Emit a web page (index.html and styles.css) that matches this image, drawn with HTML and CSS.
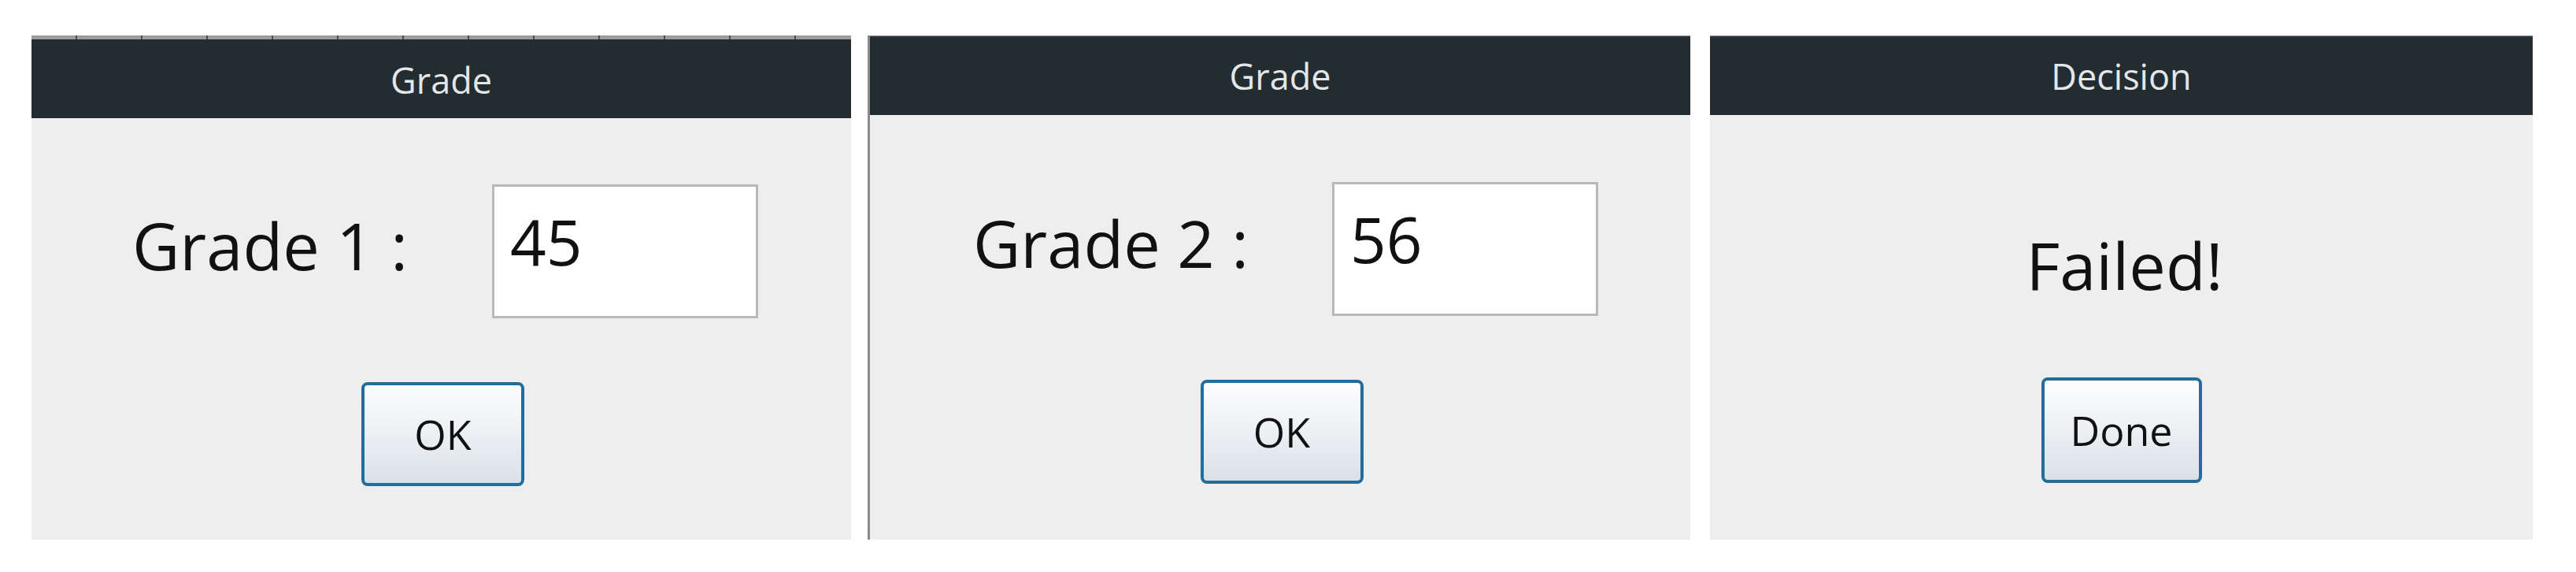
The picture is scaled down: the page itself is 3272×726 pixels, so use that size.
FILE: index.html
```html
<!DOCTYPE html>
<html lang="en">
<head>
<meta charset="utf-8">
<title>Dialogs</title>
<link rel="stylesheet" href="styles.css">
</head>
<body>
<div class="desk">
  <section class="win win-first">
    <div class="ruler"></div>
    <header class="titlebar">Grade</header>
    <div class="content">
      <div class="row">
        <div class="label">Grade 1 :</div>
        <div class="field">45</div>
      </div>
      <div class="actions"><div class="btn">OK</div></div>
    </div>
  </section>
  <section class="win win-second">
    <header class="titlebar">Grade</header>
    <div class="content">
      <div class="row row-second">
        <div class="label">Grade 2 :</div>
        <div class="field">56</div>
      </div>
      <div class="actions"><div class="btn">OK</div></div>
    </div>
  </section>
  <section class="win win-third">
    <header class="titlebar">Decision</header>
    <div class="content content-center">
      <div class="message">Failed!</div>
      <div class="actions actions-msg"><div class="btn btn-done">Done</div></div>
    </div>
  </section>
</div>
</body>
</html>
```

FILE: styles.css
```css
html, body {
  margin: 0;
  padding: 0;
  background: #ffffff;
}
body {
  width: 3272px;
  height: 726px;
  overflow: hidden;
  font-family: "Open Sans", "Noto Sans", "DejaVu Sans", sans-serif;
}
.desk {
  display: flex;
  align-items: flex-start;
  padding: 45px 0 0 40px;
}
.win {
  display: flex;
  flex-direction: column;
  height: 640px;
  background: #eeeeee;
}
.win-first { width: 1041px; }
.win-second {
  width: 1045px;
  margin-left: 21px;
  border-left: 3px solid #8a8a8a;
  box-sizing: border-box;
}
.win-third {
  width: 1045px;
  margin-left: 25px;
}
.ruler {
  height: 5px;
  background-color: #9a9c9d;
  background-image: repeating-linear-gradient(to right, transparent 0 56px, #4a4f52 56px 58px, transparent 58px 83px);
}
.titlebar {
  height: 100px;
  display: flex;
  align-items: center;
  justify-content: center;
  background: #232c31;
  color: #e4e6e7;
  font-size: 45px;
  line-height: 1;
  padding-top: 2px;
  box-sizing: border-box;
}
.win-second .titlebar,
.win-third .titlebar {
  border-top: 1px solid #8f9396;
  box-shadow: inset 0 2px 0 #2d363b;
  height: 101px;
  padding-top: 0;
}
.content {
  flex: 1;
  display: flex;
  flex-direction: column;
  padding-top: 84px;
}
.row {
  display: grid;
  grid-template-columns: 457px 338px;
  padding-left: 128px;
  align-items: start;
}
.row-second {
  padding-left: 131px;
  grid-template-columns: 456px 338px;
}
.win-second .content { padding-top: 85px; }
.label {
  margin-top: 35px;
  font-size: 83px;
  line-height: 1;
  color: #111111;
  white-space: nowrap;
}
.field {
  height: 170px;
  box-sizing: border-box;
  border: 3px solid #b9b9b9;
  background: #ffffff;
  padding: 29px 0 0 20px;
  font-size: 80px;
  line-height: 1;
  color: #111111;
}
.actions {
  display: flex;
  justify-content: center;
  padding-left: 4px;
  margin-top: 81px;
}
.btn {
  width: 207px;
  height: 132px;
  box-sizing: border-box;
  border: 4px solid #236d9c;
  border-radius: 8px;
  background: linear-gradient(to bottom, #fdfdfe 0%, #eef1f4 45%, #d9e1e8 100%);
  display: flex;
  align-items: center;
  justify-content: center;
  font-size: 52px;
  line-height: 1;
  color: #111111;
}
.content-center {
  padding-top: 148px;
  align-items: center;
}
.message {
  font-size: 83px;
  line-height: 1;
  color: #111111;
  margin-left: 8px;
}
.actions-msg {
  margin-top: 102px;
  padding-left: 0;
}
.btn-done {
  width: 204px;
  height: 134px;
}
```
